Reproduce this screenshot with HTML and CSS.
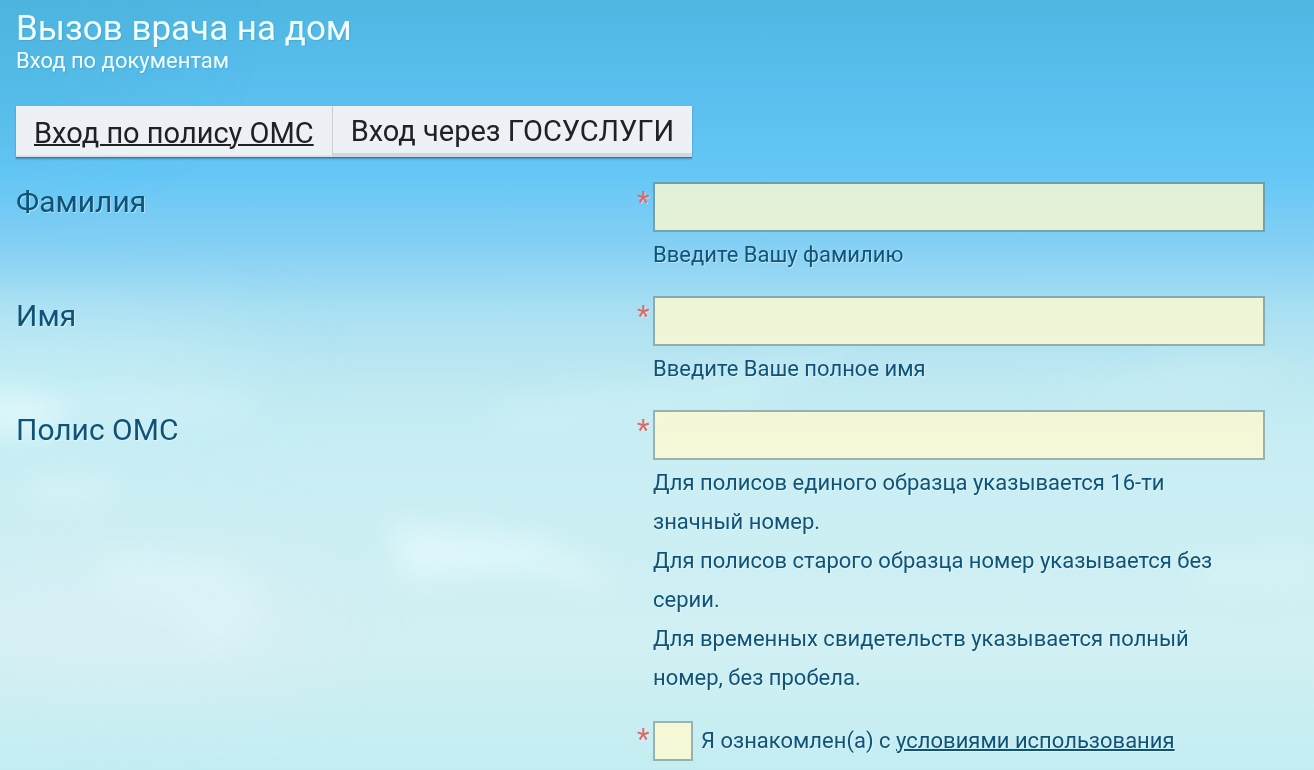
FILE: index.html
```html
<!DOCTYPE html>
<html lang="ru">
<head>
<meta charset="utf-8">
<meta name="viewport" content="width=device-width, initial-scale=1">
<title>Вызов врача на дом</title>
<link rel="stylesheet" href="styles.css">
</head>
<body>
<svg class="sky" viewBox="0 0 1314 770" preserveAspectRatio="none" aria-hidden="true">
  <defs>
    <filter id="soft" x="-50%" y="-50%" width="200%" height="200%"><feGaussianBlur stdDeviation="14"/></filter>
    <filter id="wide" filterUnits="userSpaceOnUse" x="-300" y="-300" width="1914" height="1370"><feGaussianBlur stdDeviation="40"/></filter>
  </defs>
  <g filter="url(#wide)">
    <ellipse cx="0" cy="20" rx="180" ry="130" fill="#46aed4" opacity=".25"/>
    <ellipse cx="30" cy="370" rx="240" ry="40" fill="#c8f2f8" opacity=".6"/>
    <ellipse cx="130" cy="620" rx="200" ry="60" fill="#daeff6" opacity=".8"/>
  </g>
  <g filter="url(#soft)" fill="#e4fafd">
    <ellipse cx="10" cy="412" rx="55" ry="22" opacity=".8"/>
    <ellipse cx="150" cy="405" rx="110" ry="14" opacity=".35"/>
    <path d="M390 525L430 528L540 540L610 580L600 590L540 570L400 580Z" opacity=".75"/>
    <path d="M110 550L220 555L260 590L250 640L200 650L170 610L90 590Z" opacity=".4"/>
    <path d="M480 405L700 380L860 350L760 400L520 430Z" opacity=".25"/>
    <path d="M1030 400L1200 360L1314 365L1200 400Z" opacity=".2"/>
    <path d="M1180 560L1314 550L1314 590L1210 590Z" opacity=".3"/>
    <ellipse cx="70" cy="490" rx="50" ry="18" opacity=".35"/>
  </g>
</svg>
<main class="page">
  <header class="heading">
    <h1 class="title">Вызов врача на дом</h1>
    <p class="subtitle">Вход по документам</p>
  </header>
  <nav class="tabs">
    <a class="tab tab-active" href="#oms" aria-current="page">Вход по полису ОМС</a>
    <a class="tab" href="#gosuslugi">Вход через ГОСУСЛУГИ</a>
  </nav>
  <form class="form">
    <div class="row">
      <label class="label" for="surname">Фамилия</label>
      <span class="star">*</span>
      <div class="field">
        <input class="input" id="surname" type="text" required aria-describedby="surname-hint">
        <p class="hint" id="surname-hint">Введите Вашу фамилию</p>
      </div>
    </div>
    <div class="row">
      <label class="label" for="name">Имя</label>
      <span class="star">*</span>
      <div class="field">
        <input class="input" id="name" type="text" required aria-describedby="name-hint">
        <p class="hint" id="name-hint">Введите Ваше полное имя</p>
      </div>
    </div>
    <div class="row">
      <label class="label" for="policy">Полис ОМС</label>
      <span class="star">*</span>
      <div class="field">
        <input class="input" id="policy" type="text" required aria-describedby="policy-hint">
        <div class="hint" id="policy-hint">
          <p>Для полисов единого образца указывается 16-ти значный номер.</p>
          <p>Для полисов старого образца номер указывается без серии.</p>
          <p>Для временных свидетельств указывается полный номер, без пробела.</p>
        </div>
      </div>
    </div>
    <div class="row">
      <span class="star">*</span>
      <div class="field agree">
        <input class="check" id="agree" type="checkbox" required>
        <label for="agree">Я ознакомлен(а) с <a class="link" href="#terms">условиями использования</a></label>
      </div>
    </div>
  </form>
</main>
</body>
</html>
```
FILE: styles.css
```css
* {
  box-sizing: border-box;
}

body {
  margin: 0;
  min-height: 100vh;
  overflow-x: hidden;
  font-family: Roboto, "Liberation Sans", sans-serif;
  color: #0f5478;
  background: linear-gradient(#4fb6e2 0, #5abfee 12%, #66c7f6 23%, #85d0f4 32%, #a8dff2 40%, #bce7f1 48%, #c7edf4 56%, #cceff3 70%, #d1f0f3 84%, #c3edf2 100%);
}

p,
h1 {
  margin: 0;
}

.sky {
  position: absolute;
  inset: 0;
  z-index: -1;
  width: 100%;
  height: 100%;
}

.page {
  padding: 8px 16px;
}

.heading {
  color: #f2ffff;
  text-shadow: 1px 1px 1px rgba(0, 80, 120, 0.15);
}

.title {
  font-size: 35px;
  font-weight: 400;
  line-height: 42px;
}

.subtitle {
  font-size: 22px;
  line-height: 22px;
}

.tabs {
  display: flex;
  width: fit-content;
  margin-top: 34px;
  background: #edf0f4;
  border-bottom: 1px solid #4a6f83;
  box-shadow: 0 1px 2px rgba(0, 50, 80, 0.35);
}

.tab {
  padding: 5px 18px 2px;
  font-size: 29px;
  line-height: 40px;
  color: #202124;
  text-decoration: none;
  border-bottom: 4px solid #d4d7de;
}

.tab-active {
  padding-top: 7px;
  text-decoration: underline;
  text-decoration-thickness: 2px;
  border-right: 1px solid #cbcfd5;
  border-bottom: 2px solid #dde2e7;
}

.form {
  display: grid;
  gap: 22px;
  margin-top: 24px;
  text-shadow: 1px 1px 0 rgba(255, 255, 255, 0.4);
}

.row {
  display: grid;
  grid-template-columns: minmax(0, 621fr) 16px minmax(0, 612fr);
  padding-right: 33px;
}

.label {
  font-size: 30px;
  line-height: 40px;
}

.star {
  grid-column: 2;
  font-size: 29px;
  line-height: 40px;
  color: #d96c6a;
}

.field {
  grid-column: 3;
}

.input,
.check {
  display: block;
  appearance: none;
  margin: 0;
  color: #0f5478;
  background: rgba(255, 250, 208, 0.8);
  background-clip: padding-box;
  border: 2px solid rgba(104, 120, 110, 0.5);
  border-radius: 0;
  outline: 0;
}

.input {
  width: 100%;
  height: 50px;
  padding: 0 12px;
  font: inherit;
  font-size: 24px;
}

.hint {
  padding: 3px 16px 0 0;
  font-size: 22px;
  line-height: 39px;
}

.agree {
  display: flex;
  align-items: center;
  align-self: start;
  gap: 8px;
  padding-top: 2px;
  font-size: 22px;
  line-height: 40px;
}

.check {
  flex: none;
  width: 40px;
  height: 40px;
}

.check:checked {
  background: #0f5478;
  background-clip: content-box;
  padding: 8px;
}

.link {
  color: inherit;
  text-decoration-thickness: 2px;
}
```
